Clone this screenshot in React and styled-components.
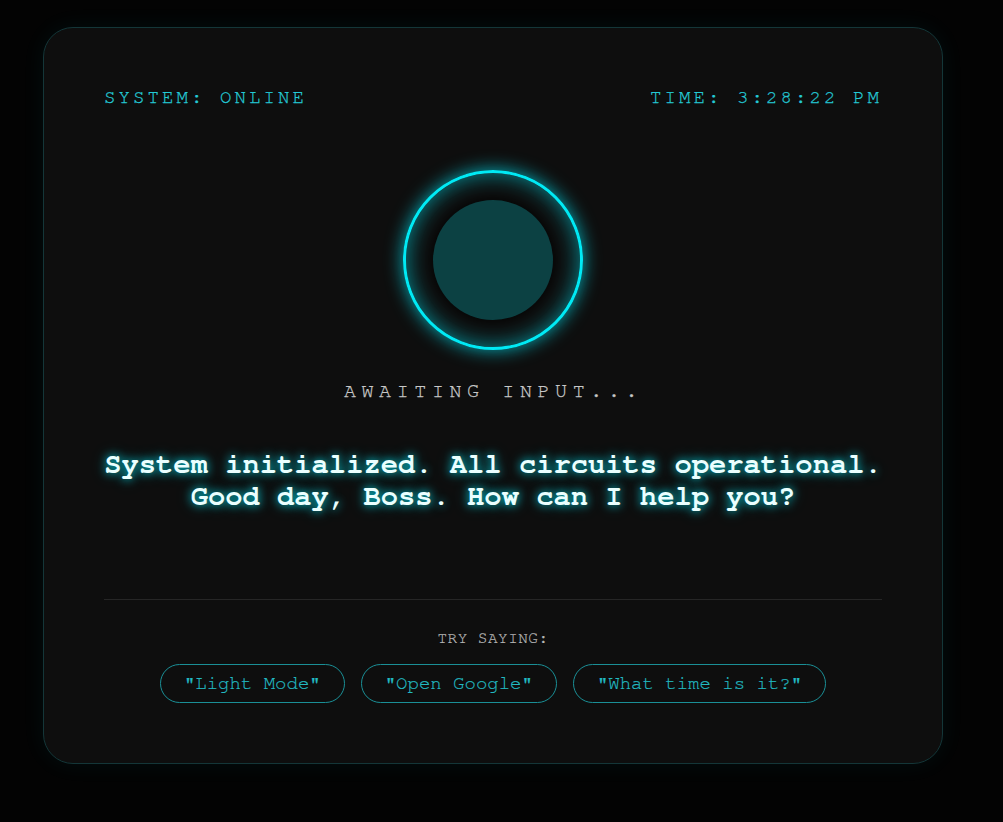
import React from 'react';
import styled, { createGlobalStyle } from 'styled-components';

const GlobalStyle = createGlobalStyle`
  html, body {
    margin: 0;
    padding: 0;
    background: #030303;
  }
  body {
    font-family: FreeMono, 'TeX Gyre Cursor', 'Courier New', monospace;
  }
`;

const Page = styled.div`
  min-height: 822px;
  padding: 27px 0 0 43px;
  box-sizing: border-box;
`;

const Card = styled.div`
  width: 900px;
  box-sizing: border-box;
  padding: 60px;
  background: #0e0e0e;
  border: 1px solid #143638;
  border-radius: 30px;
  box-shadow: 0 0 24px rgba(0, 220, 230, 0.06);
  display: flex;
  flex-direction: column;
  align-items: center;
`;

const Header = styled.div`
  width: 100%;
  display: flex;
  justify-content: space-between;
  color: #24cad6;
  font-size: 19px;
  letter-spacing: 3.1px;
  line-height: 20px;
  -webkit-text-stroke: 0.25px #24cad6;
`;

const Orb = styled.div`
  margin-top: 62px;
  width: 180px;
  height: 180px;
  box-sizing: border-box;
  border-radius: 50%;
  border: 3px solid #00eaf5;
  box-shadow: 0 0 18px rgba(0, 230, 245, 0.75), inset 0 0 22px rgba(0, 230, 245, 0.6);
  display: flex;
  align-items: center;
  justify-content: center;
`;

const Core = styled.div`
  width: 120px;
  height: 120px;
  border-radius: 50%;
  background: #0c4143;
  box-shadow: 0 0 12px rgba(0, 0, 0, 0.8);
`;

const Status = styled.div`
  margin-top: 30px;
  color: #c8c8c8;
  font-size: 20px;
  line-height: 22px;
  letter-spacing: 5.6px;
  padding-left: 1px;
  -webkit-text-stroke: 0.25px #c8c8c8;
`;

const Message = styled.div`
  margin-top: 47px;
  color: #eaffff;
  font-weight: bold;
  font-size: 28.8px;
  line-height: 32px;
  text-align: center;
  text-shadow: 0 0 8px rgba(0, 230, 245, 0.85), 0 0 16px rgba(0, 230, 245, 0.4);
`;

const Divider = styled.div`
  width: 100%;
  height: 1px;
  background: #262626;
  margin-top: 86px;
`;

const Hint = styled.div`
  margin-top: 30px;
  color: #b8b8b8;
  font-size: 16px;
  line-height: 16px;
  letter-spacing: 0.5px;
  -webkit-text-stroke: 0.2px #b8b8b8;
`;

const Suggestions = styled.div`
  margin-top: 18px;
  display: flex;
  gap: 16px;
`;

const Chip = styled.button`
  font-family: inherit;
  background: transparent;
  color: #22bac2;
  border: 1px solid #1a8f96;
  border-radius: 999px;
  height: 39px;
  padding: 0 23px;
  font-size: 19px;
  -webkit-text-stroke: 0.2px #22bac2;
  cursor: pointer;
`;

const suggestions = ['"Light Mode"', '"Open Google"', '"What time is it?"'];

export default function App() {
  return (
    <>
      <GlobalStyle />
      <Page>
        <Card>
          <Header>
            <span>SYSTEM: ONLINE</span>
            <span>TIME: 3:28:22 PM</span>
          </Header>
          <Orb>
            <Core />
          </Orb>
          <Status>AWAITING INPUT...</Status>
          <Message>
            System initialized. All circuits operational.
            <br />
            Good day, Boss. How can I help you?
          </Message>
          <Divider />
          <Hint>TRY SAYING:</Hint>
          <Suggestions>
            {suggestions.map((s) => (
              <Chip key={s}>{s}</Chip>
            ))}
          </Suggestions>
        </Card>
      </Page>
    </>
  );
}
